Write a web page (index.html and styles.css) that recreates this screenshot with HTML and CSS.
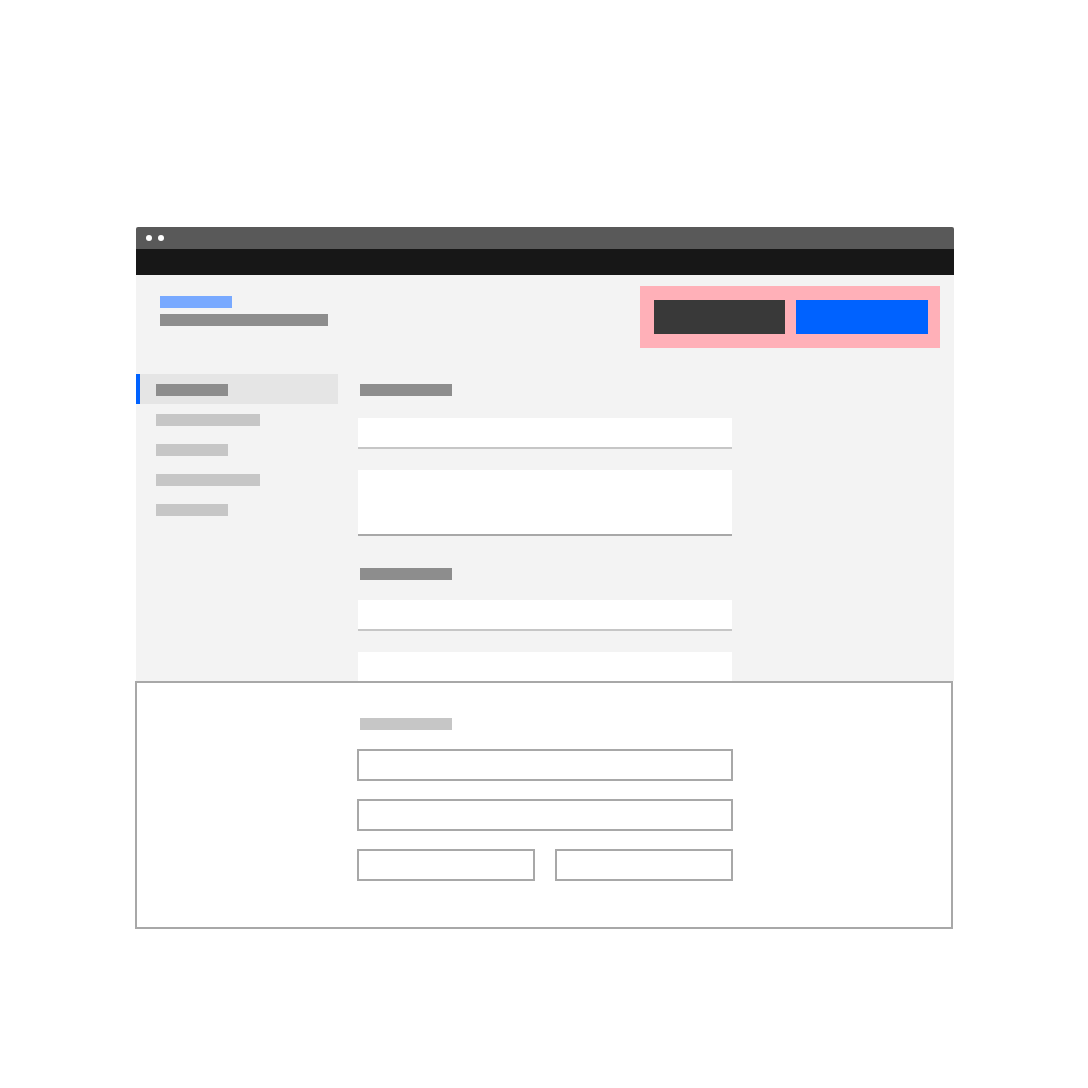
FILE: index.html
```html
<!DOCTYPE html>
<html lang="en">
<head>
<meta charset="utf-8">
<title>Form wireframe</title>
<link rel="stylesheet" href="styles.css">
</head>
<body>
<div class="stage">
  <div class="window">
    <div class="titlebar">
      <span class="dot"></span>
      <span class="dot"></span>
    </div>
    <div class="navbar"></div>
    <div class="content">
      <div class="header">
        <div class="title-block">
          <div class="bar bar-blue w72"></div>
          <div class="bar bar-dark w168"></div>
        </div>
        <div class="actions">
          <div class="btn btn-secondary"></div>
          <div class="btn btn-primary"></div>
        </div>
      </div>
      <div class="main">
        <nav class="sidebar">
          <div class="nav-item active"><div class="bar bar-dark w72"></div></div>
          <div class="nav-item"><div class="bar bar-light w104"></div></div>
          <div class="nav-item"><div class="bar bar-light w72"></div></div>
          <div class="nav-item"><div class="bar bar-light w104"></div></div>
          <div class="nav-item"><div class="bar bar-light w72"></div></div>
        </nav>
        <div class="form">
          <div class="bar bar-dark w92 heading first"></div>
          <div class="field"></div>
          <div class="field textarea"></div>
          <div class="bar bar-dark w92 heading second"></div>
          <div class="field"></div>
          <div class="field"></div>
        </div>
      </div>
    </div>
  </div>
  <div class="panel">
    <div class="panel-form">
      <div class="bar bar-light w92 panel-label"></div>
      <div class="box"></div>
      <div class="box"></div>
      <div class="box-row">
        <div class="box"></div>
        <div class="box"></div>
      </div>
    </div>
  </div>
</div>
</body>
</html>
```
FILE: styles.css
```css
html, body {
  margin: 0;
  padding: 0;
  background: #ffffff;
  font-family: "Liberation Sans", Arial, sans-serif;
}

.stage {
  padding: 227px 0 0 136px;
  width: 818px;
}

.window {
  width: 818px;
}

.titlebar {
  height: 22px;
  background: #595959;
  border-radius: 2px 2px 0 0;
  display: flex;
  align-items: center;
  gap: 6px;
  padding-left: 10px;
  box-sizing: border-box;
}

.dot {
  width: 6px;
  height: 6px;
  border-radius: 50%;
  background: #ffffff;
}

.navbar {
  height: 26px;
  background: #171717;
}

.content {
  background: #f3f3f3;
  height: 406px;
  overflow: hidden;
}

.header {
  height: 99px;
  box-sizing: border-box;
  padding: 11px 14px 0 24px;
  display: flex;
  justify-content: space-between;
  align-items: flex-start;
}

.title-block {
  margin-top: 10px;
  display: flex;
  flex-direction: column;
  gap: 6px;
}

.bar {
  height: 12px;
}

.bar-blue { background: #78a9ff; }
.bar-dark { background: #8d8d8d; }
.bar-light { background: #c6c6c6; }

.w72 { width: 72px; }
.w92 { width: 92px; }
.w104 { width: 104px; }
.w168 { width: 168px; }

.actions {
  background: #ffb0b8;
  padding: 14px 12px 14px 14px;
  display: flex;
  gap: 11px;
}

.btn {
  height: 34px;
}

.btn-secondary {
  width: 131px;
  background: #393939;
}

.btn-primary {
  width: 132px;
  background: #0062ff;
}

.main {
  display: flex;
  gap: 20px;
}

.sidebar {
  width: 202px;
  display: flex;
  flex-direction: column;
}

.nav-item {
  height: 30px;
  box-sizing: border-box;
  padding: 10px 0 0 20px;
}

.nav-item.active {
  background: #e5e5e5;
  border-left: 4px solid #0062ff;
  padding-left: 16px;
}

.form {
  width: 374px;
  display: flex;
  flex-direction: column;
}

.heading {
  margin-left: 2px;
}

.heading.first {
  margin-top: 10px;
  margin-bottom: 22px;
}

.heading.second {
  margin-top: 32px;
  margin-bottom: 20px;
}

.field {
  height: 31px;
  box-sizing: border-box;
  background: #ffffff;
  border-bottom: 2px solid #c6c6c6;
  flex-shrink: 0;
}

.field + .field {
  margin-top: 21px;
}

.field.textarea {
  height: 66px;
  border-bottom: 2px solid #a8a8a8;
}

.panel {
  margin-left: -1px;
  width: 818px;
  height: 248px;
  box-sizing: border-box;
  border: 2px solid #a8a8a8;
  background: #ffffff;
  padding: 35px 0 0 220px;
}

.panel-form {
  width: 376px;
  display: flex;
  flex-direction: column;
  gap: 18px;
}

.panel-label {
  margin-left: 3px;
  margin-bottom: 1px;
}

.box {
  height: 32px;
  box-sizing: border-box;
  border: 2px solid #a8a8a8;
  background: #ffffff;
}

.box-row {
  display: flex;
  gap: 20px;
}

.box-row .box {
  flex: 1;
}
```
